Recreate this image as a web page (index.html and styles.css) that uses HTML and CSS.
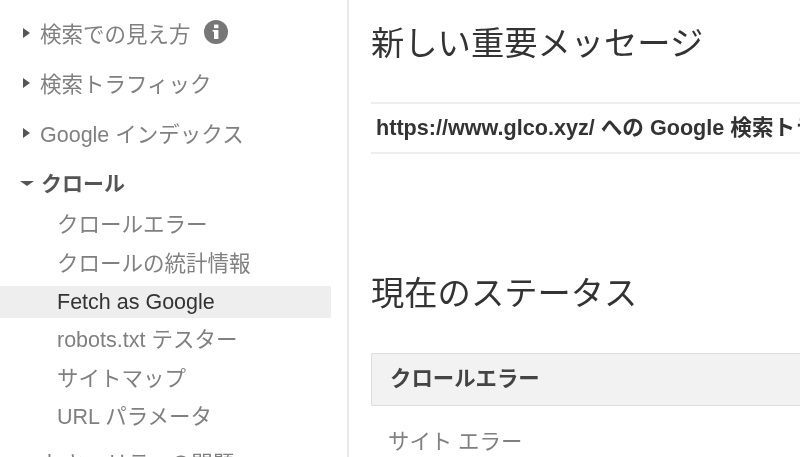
FILE: index.html
```html
<!DOCTYPE html>
<html lang="ja">
<head>
  <meta charset="UTF-8">
  <title>Search Console</title>
  <link rel="stylesheet" href="styles.css">
</head>
<body>
  <div class="page">
    <nav class="sidebar">
      <div class="section">
        <i class="arrow"></i><span>検索での見え方</span>
        <svg class="info" viewBox="0 0 24 24"><circle cx="12" cy="12" r="12" fill="#777"/><rect x="10" y="10" width="4.4" height="9" fill="#fff"/><rect x="10" y="4.6" width="4.4" height="3.6" fill="#fff"/><rect x="8.6" y="10" width="2" height="1.6" fill="#fff"/></svg>
      </div>
      <div class="section"><i class="arrow"></i><span>検索トラフィック</span></div>
      <div class="section"><i class="arrow"></i><span>Google インデックス</span></div>
      <div class="section open"><i class="arrow down"></i><span>クロール</span></div>
      <ul class="sub">
        <li>クロールエラー</li>
        <li>クロールの統計情報</li>
        <li class="active">Fetch as Google</li>
        <li>robots.txt テスター</li>
        <li>サイトマップ</li>
        <li>URL パラメータ</li>
      </ul>
      <div class="section last"><span>セキュリティの問題</span></div>
    </nav>
    <main class="content">
      <h1>新しい重要メッセージ</h1>
      <div class="message">https://www.glco.xyz/ への Google 検索トラフィックが減少しました</div>
      <h1 class="status-title">現在のステータス</h1>
      <div class="panel-head">クロールエラー</div>
      <div class="panel-label">サイト エラー</div>
    </main>
  </div>
</body>
</html>
```

FILE: styles.css
```css
* { padding: 0; margin: 0; box-sizing: border-box; }
html, body { height: 100%; overflow: hidden; background: #fff; }
body {
  font-family: "Liberation Sans", "Noto Sans CJK JP", sans-serif;
  color: #808080;
}
.page { display: flex; height: 457px; overflow: hidden; filter: blur(0.4px); }

/* left menu */
.sidebar {
  width: 349px;
  flex: none;
  border-right: 2px solid #e9e9e9;
  padding: 7px 16px 0 0;
  font-size: 21.5px;
}
.section {
  display: flex;
  align-items: center;
  height: 50px;
  padding-left: 23px;
}
.section span { margin-left: 10px; }
.section.open { color: #555; font-weight: bold; margin-bottom: -2px; }
.section.open span { margin-left: 7px; font-size: 21px; }
.section.last { padding-left: 32px; height: 40px; margin-top: 5px; }
.arrow {
  width: 0;
  height: 0;
  margin-top: 2px;
  border-left: 7px solid #555;
  border-top: 5px solid transparent;
  border-bottom: 5px solid transparent;
}
.arrow.down {
  margin-left: -3px;
  margin-top: 3px;
  border-top: 5px solid #555;
  border-left: 7px solid transparent;
  border-right: 7px solid transparent;
  border-bottom: 0;
}
.info { width: 24px; height: 24px; margin-left: 13px; }
.sub { list-style: none; padding-top: 1px; }
.sub li {
  height: 38.5px;
  line-height: 38px;
  padding-left: 57px;
  white-space: nowrap;
}
.sub li.active { background: #eee; color: #333; height: 32px; line-height: 32px; margin: 3px 0 3px; }

/* right side */
.content { flex: 1; min-width: 0; padding: 20px 0 0 22px; color: #333; overflow: hidden; }
h1 { font-size: 33.3px; font-weight: normal; line-height: 48px; white-space: nowrap; }
.message {
  margin-top: 34px;
  height: 52px;
  line-height: 48px;
  padding-left: 5px;
  border-top: 2px solid #eee;
  border-bottom: 2px solid #eee;
  font-size: 21.6px;
  font-weight: bold;
  white-space: nowrap;
  overflow: hidden;
}
.status-title { margin-top: 116px; }
.panel-head {
  margin-top: 35px;
  height: 53px;
  line-height: 51px;
  padding-left: 18px;
  background: #f2f2f2;
  border: 1px solid #ddd;
  border-right: 0;
  border-radius: 2px 0 0 2px;
  font-size: 21.4px;
  font-weight: bold;
  color: #444;
}
.panel-label { margin-top: 18px; padding-left: 17px; font-size: 21.4px; color: #808080; }
```
